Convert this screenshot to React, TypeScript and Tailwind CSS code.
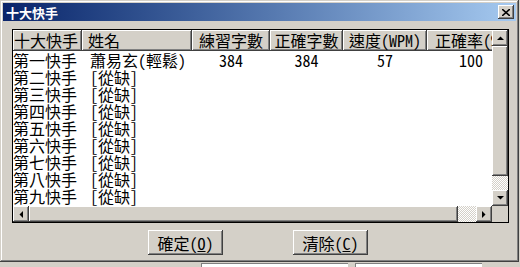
import React from "react";

const raised =
    "bg-[#d4d0c8] shadow-[inset_-1px_-1px_#404040,inset_1px_1px_#fff,inset_-2px_-2px_#808080,inset_2px_2px_#d4d0c8]";
const dither = "bg-[repeating-conic-gradient(#d4d0c8_0_25%,#ffffff_0_50%)] bg-[length:2px_2px]";

const columns = [
    { title: "十大快手", width: "w-[69px]", head: "pl-[1px] text-left" },
    { title: "姓名", width: "w-[110px]", head: "pl-[6px] text-left" },
    { title: "練習字數", width: "w-[78px]", head: "text-center" },
    { title: "正確字數", width: "w-[73px]", head: "text-center" },
    { title: "速度(WPM)", width: "w-[84px]", head: "text-center" },
    { title: "正確率(%)", width: "w-[88px]", head: "text-center" },
];

const ranks = ["第一快手", "第二快手", "第三快手", "第四快手", "第五快手", "第六快手", "第七快手", "第八快手", "第九快手"];

const rows = ranks.map((rank, i) =>
    i === 0
        ? { rank, name: "蕭易玄(輕鬆)", practice: "384", correct: "384", speed: "57", rate: "100" }
        : { rank, name: "[從缺]", practice: "", correct: "", speed: "", rate: "" }
);

function Arrow({ dir }: { dir: "up" | "down" | "left" | "right" }) {
    const pts = {
        up: "0,4 7,4 3.5,0.5",
        down: "0,0 7,0 3.5,3.5",
        left: "4,0 4,7 0.5,3.5",
        right: "0,0 0,7 3.5,3.5",
    }[dir];
    const vertical = dir === "up" || dir === "down";
    return (
        <div className={`${raised} w-[16px] h-[16px] shrink-0 flex items-center justify-center`}>
            <svg width={vertical ? 7 : 4} height={vertical ? 4 : 7} viewBox={vertical ? "0 0 7 4" : "0 0 4 7"}>
                <polygon points={pts} fill="#000" />
            </svg>
        </div>
    );
}

export default function App() {
    return (
        <div className="w-[520px] h-[267px] bg-[#d4d0c8] flex flex-col font-['Noto_Sans_Mono_CJK_TC','Noto_Sans_CJK_TC',sans-serif] text-black overflow-hidden">
            <div className="w-[519px] h-[262px] p-[3px] flex flex-col shadow-[inset_-1px_-1px_#404040,inset_1px_1px_#d4d0c8,inset_-2px_-2px_#808080,inset_2px_2px_#fff]">
                {/* title bar */}
                <div className="h-[18px] bg-linear-to-r from-[#0a246a] to-[#a6caf0] flex items-center justify-between pl-[3px] pr-[2px]">
                    <span className="text-white font-bold text-[13px] leading-none font-['Noto_Sans_CJK_TC',sans-serif]">十大快手</span>
                    <div className={`${raised} w-[16px] h-[14px] flex items-center justify-center`}>
                        <svg width="8" height="7" viewBox="0 0 8 7">
                            <path d="M0 0 L8 7 M8 0 L0 7" stroke="#000" strokeWidth="1.6" />
                        </svg>
                    </div>
                </div>

                {/* list view */}
                <div className="mt-[8px] ml-[9px] w-[497px] h-[194px] border border-black bg-white flex">
                    <div className="w-[479px] flex flex-col">
                        <div className="h-[176px] overflow-hidden">
                            <div className="flex w-[502px] h-[22px] text-[16px] leading-[21px]">
                                {columns.map((c) => (
                                    <div
                                        key={c.title}
                                        className={`${c.width} ${c.head} shrink-0 h-[21px] whitespace-nowrap overflow-hidden bg-[#d4d0c8] shadow-[inset_-1px_-1px_#404040,inset_1px_1px_#fff,inset_-2px_-2px_#808080]`}
                                    >
                                        {c.title}
                                    </div>
                                ))}
                            </div>
                            {rows.map((r) => (
                                <div key={r.rank} className="flex w-[502px] h-[17px] text-[16px] leading-[17px] whitespace-nowrap">
                                    <div className="w-[69px] shrink-0">{r.rank}</div>
                                    <div className="w-[110px] shrink-0 pl-[8px]">{r.name}</div>
                                    <div className="w-[78px] shrink-0 text-center">{r.practice}</div>
                                    <div className="w-[73px] shrink-0 text-center">{r.correct}</div>
                                    <div className="w-[84px] shrink-0 text-center">{r.speed}</div>
                                    <div className="w-[88px] shrink-0 text-center">{r.rate}</div>
                                </div>
                            ))}
                        </div>
                        {/* horizontal scrollbar */}
                        <div className="h-[16px] flex">
                            <Arrow dir="left" />
                            <div className={`${raised} w-[429px] h-[16px]`} />
                            <div className={`${dither} w-[18px] h-[16px]`} />
                            <Arrow dir="right" />
                        </div>
                    </div>
                    {/* vertical scrollbar */}
                    <div className="w-[16px] flex flex-col">
                        <Arrow dir="up" />
                        <div className={`${raised} w-[16px] h-[130px]`} />
                        <div className={`${dither} w-[16px] h-[14px]`} />
                        <Arrow dir="down" />
                        <div className="w-[16px] h-[16px] bg-[#d4d0c8]" />
                    </div>
                </div>

                {/* buttons */}
                <div className="mt-[7px] pl-[145px] flex gap-[70px]">
                    {[
                        { label: "確定(", key: "O" },
                        { label: "清除(", key: "C" },
                    ].map((b) => (
                        <button
                            key={b.key}
                            className={`${raised} w-[75px] h-[25px] text-[16px] leading-none flex items-center justify-center`}
                        >
                            {b.label}
                            <span className="underline">{b.key}</span>)
                        </button>
                    ))}
                </div>
            </div>
            {/* bits of the screen behind */}
            <div className="h-[5px] flex pt-[1px]">
                <div className="ml-[201px] w-[147px] h-[4px] bg-white border-t border-l border-[#808080]" />
                <div className="ml-[7px] w-[127px] h-[4px] bg-white border-t border-l border-[#808080]" />
            </div>
        </div>
    );
}
